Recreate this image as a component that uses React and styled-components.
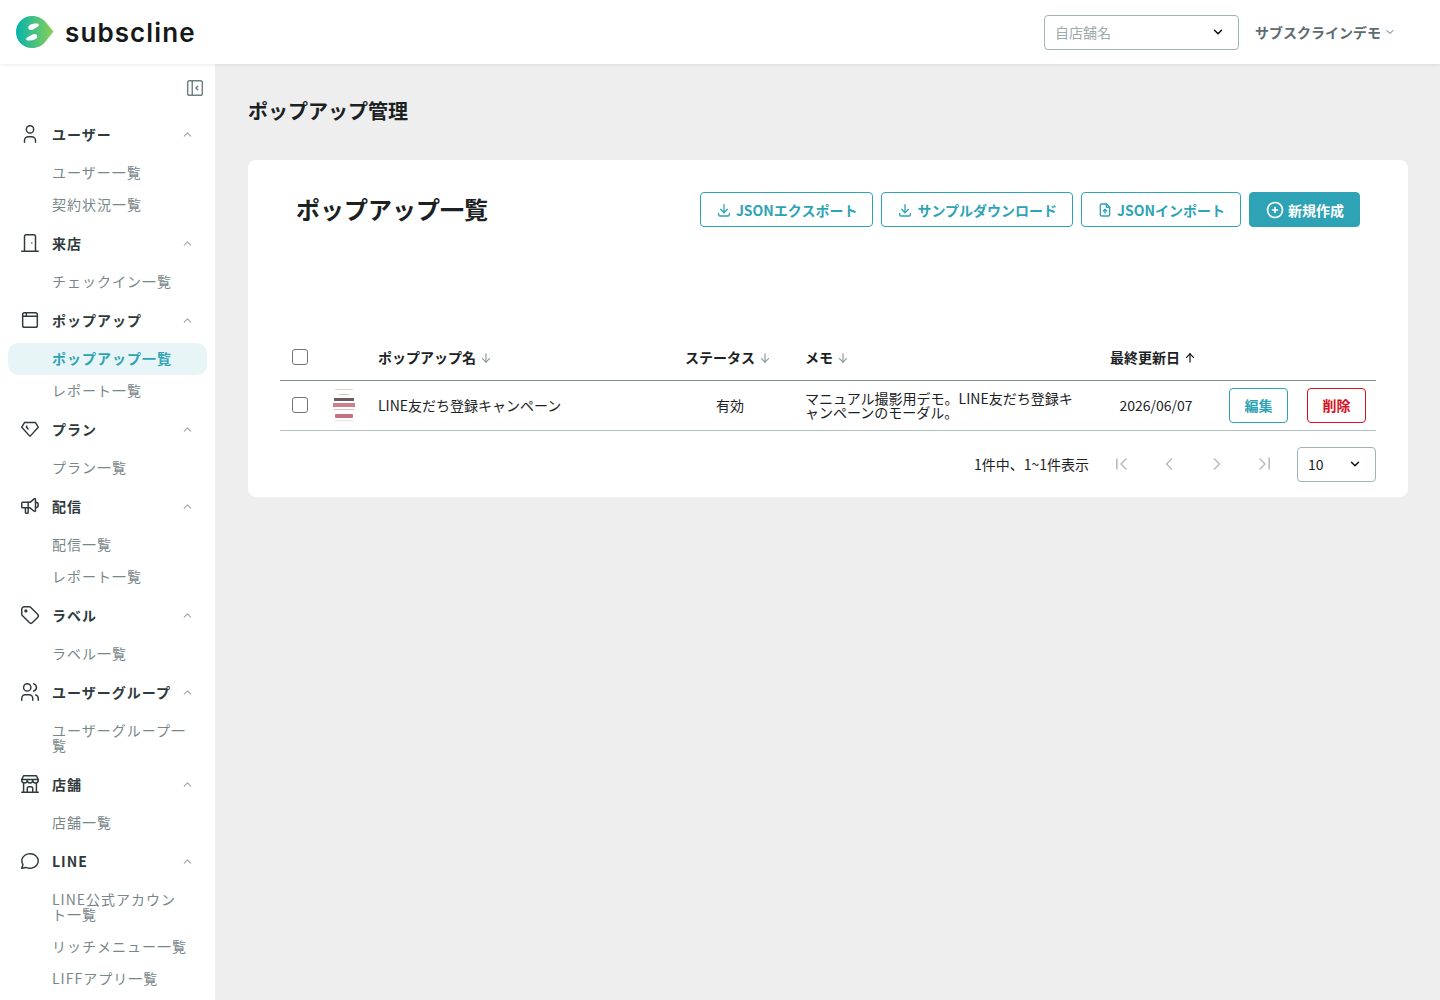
import React from 'react';
import styled, { createGlobalStyle } from 'styled-components';
import {
  TbUser, TbDoor, TbBrowser, TbDiamond, TbSpeakerphone, TbTag, TbUsers, TbBuildingStore, TbMessageCircle,
  TbChevronUp, TbChevronDown, TbDownload, TbCirclePlus, TbLayoutSidebarLeftCollapse,
  TbChevronLeftPipe, TbChevronRightPipe, TbChevronLeft, TbChevronRight, TbArrowDown, TbArrowUp, TbFileUpload,
} from 'react-icons/tb';

const sideGroups = [
  { icon: TbUser, title: 'ユーザー', items: ['ユーザー一覧', '契約状況一覧'] },
  { icon: TbDoor, title: '来店', items: ['チェックイン一覧'] },
  { icon: TbBrowser, title: 'ポップアップ', items: ['ポップアップ一覧', 'レポート一覧'], active: 'ポップアップ一覧' },
  { icon: TbDiamond, title: 'プラン', items: ['プラン一覧'] },
  { icon: TbSpeakerphone, title: '配信', items: ['配信一覧', 'レポート一覧'] },
  { icon: TbTag, title: 'ラベル', items: ['ラベル一覧'] },
  { icon: TbUsers, title: 'ユーザーグループ', items: ['ユーザーグループ一覧'] },
  { icon: TbBuildingStore, title: '店舗', items: ['店舗一覧'] },
  { icon: TbMessageCircle, title: 'LINE', items: ['LINE公式アカウント一覧', 'リッチメニュー一覧', 'LIFFアプリ一覧'] },
];

const LogoMark = () => (
  <svg width="38" height="32" viewBox="0 0 38 32">
    <defs>
      <linearGradient id="logoGrad" x1="0" y1="0" x2="1" y2="0">
        <stop offset="0%" stopColor="#06b3ae" />
        <stop offset="100%" stopColor="#8ccf55" />
      </linearGradient>
    </defs>
    <path d="M16 0C22 0 27 2.5 30 6.5L37.5 15.5L30 25C27 29.5 22 32 16 32C7 32 0 25 0 16C0 7 7 0 16 0Z" fill="url(#logoGrad)" />
    <path d="M21 7.5C18 7.5 13.5 8 12.5 10.5C11.5 13 14 15 17 13.5L22 10.5C23.5 9.5 23 7.5 21 7.5Z" fill="#fff" />
    <path d="M12 24.5C15 24.5 20 24 21 21.5C22 19 19.5 17 16.5 18.5L11 21.5C9.5 22.5 10 24.5 12 24.5Z" fill="#fff" />
  </svg>
);

const Thumb = () => (
  <svg width="28" height="34" viewBox="0 0 28 34">
    <rect width="28" height="34" fill="#fff" />
    <rect x="5" y="1" width="18" height="1" fill="#eccfd2" />
    <rect x="9" y="6" width="10" height="1" fill="#d8c4c6" />
    <rect x="4" y="10" width="20" height="3" fill="#6b5a5d" />
    <rect x="3" y="15" width="22" height="4" fill="#c9808a" />
    <rect x="4" y="21" width="20" height="1" fill="#cfc6c7" />
    <rect x="5" y="26" width="18" height="4" rx="1" fill="#c4717f" />
    <rect x="5" y="32" width="18" height="1" fill="#efdfe1" />
  </svg>
);

const App = () => {
  return (
    <>
      <GlobalStyle />
      <Page>
        <TopBar>
          <Logo>
            <LogoMark />
            <LogoText>subscline</LogoText>
          </Logo>
          <TopRight>
            <SelectBox $width={195}>
              <Placeholder>自店舗名</Placeholder>
              <TbChevronDown size={14} color="#111" strokeWidth={2.6} />
            </SelectBox>
            <UserMenu>
              サブスクラインデモ
              <TbChevronDown size={12} color="#5d6c6f" />
            </UserMenu>
          </TopRight>
        </TopBar>
        <Body>
          <Sidebar>
            <CollapseRow>
              <TbLayoutSidebarLeftCollapse size={22} color="#6f8083" strokeWidth={1.6} />
            </CollapseRow>
            {sideGroups.map((group) => {
              const Icon = group.icon;
              return (
                <div key={group.title}>
                  <GroupHead>
                    <GroupIcon><Icon size={22} color="#2f3a3c" strokeWidth={1.6} /></GroupIcon>
                    <GroupTitle>{group.title}</GroupTitle>
                    <TbChevronUp size={13} color="#9aa7a9" />
                  </GroupHead>
                  {group.items.map((item) => (
                    <SideItem key={item} $active={item === group.active}>{item}</SideItem>
                  ))}
                </div>
              );
            })}
          </Sidebar>
          <Main>
            <PageTitle>ポップアップ管理</PageTitle>
            <Card>
              <CardHead>
                <CardTitle>ポップアップ一覧</CardTitle>
                <Actions>
                  <OutlineButton><TbDownload size={16} />JSONエクスポート</OutlineButton>
                  <OutlineButton><TbDownload size={16} />サンプルダウンロード</OutlineButton>
                  <OutlineButton><TbFileUpload size={16} />JSONインポート</OutlineButton>
                  <SolidButton><TbCirclePlus size={20} />新規作成</SolidButton>
                </Actions>
              </CardHead>
              <Table>
                <colgroup>
                  <col width="40" />
                  <col width="48" />
                  <col width="307" />
                  <col width="120" />
                  <col width="305" />
                  <col width="112" />
                  <col width="164" />
                </colgroup>
                <thead>
                  <tr>
                    <HeadCell><CheckBox /></HeadCell>
                    <HeadCell />
                    <HeadCell>ポップアップ名<TbArrowDown size={14} color="#8a9698" /></HeadCell>
                    <HeadCell>ステータス<TbArrowDown size={14} color="#8a9698" /></HeadCell>
                    <HeadCell>メモ<TbArrowDown size={14} color="#8a9698" /></HeadCell>
                    <HeadCell>最終更新日<TbArrowUp size={14} color="#111" /></HeadCell>
                    <HeadCell />
                  </tr>
                </thead>
                <tbody>
                  <tr>
                    <Cell><CheckBox /></Cell>
                    <Cell><ThumbWrap><Thumb /></ThumbWrap></Cell>
                    <Cell>LINE友だち登録キャンペーン</Cell>
                    <StatusCell>有効</StatusCell>
                    <MemoCell>マニュアル撮影用デモ。LINE友だち登録キャンペーンのモーダル。</MemoCell>
                    <DateCell>2026/06/07</DateCell>
                    <Cell>
                      <RowActions>
                        <RowButton $color="#2ea3b5">編集</RowButton>
                        <RowButton $color="#d5121e">削除</RowButton>
                      </RowActions>
                    </Cell>
                  </tr>
                </tbody>
              </Table>
              <Pagination>
                <PageInfo>1件中、1~1件表示</PageInfo>
                <PageIcons>
                  <TbChevronLeftPipe size={20} />
                  <TbChevronLeft size={20} />
                  <TbChevronRight size={20} />
                  <TbChevronRightPipe size={20} />
                </PageIcons>
                <SelectBox $width={79}>
                  <PageSize>10</PageSize>
                  <TbChevronDown size={14} color="#111" strokeWidth={2.6} />
                </SelectBox>
              </Pagination>
            </Card>
          </Main>
        </Body>
      </Page>
    </>
  );
};

export default App;

const GlobalStyle = createGlobalStyle`
  html, body {
    margin: 0;
    height: 100%;
    overflow: hidden;
  }
  body {
    font-family: "Noto Sans CJK JP", "Noto Sans", sans-serif;
    color: #1c2224;
  }
  * {
    box-sizing: border-box;
  }
`;

const Page = styled.div`
  height: 1000px;
  display: flex;
  flex-direction: column;
  background: #eeeeee;
`;

const TopBar = styled.header`
  height: 64px;
  flex-shrink: 0;
  display: flex;
  align-items: center;
  justify-content: space-between;
  padding: 0 44px 0 16px;
  background: #fff;
  box-shadow: 0 1px 4px rgba(0, 0, 0, 0.08);
  position: relative;
  z-index: 2;
`;

const Logo = styled.div`
  display: flex;
  align-items: center;
  gap: 11px;
`;

const LogoText = styled.span`
  font-family: "Inter", sans-serif;
  font-size: 26px;
  font-weight: 600;
  letter-spacing: 1.1px;
  color: #15191a;
`;

const TopRight = styled.div`
  display: flex;
  align-items: center;
  gap: 16px;
`;

const SelectBox = styled.div`
  width: ${(p) => p.$width}px;
  height: 35px;
  display: flex;
  align-items: center;
  justify-content: space-between;
  padding: 0 13px 0 10px;
  background: #fff;
  border: 1px solid #a3b3b5;
  border-radius: 4px;
`;

const Placeholder = styled.span`
  font-size: 14px;
  color: #9caaac;
`;

const PageSize = styled.span`
  font-size: 14px;
  color: #1c2224;
`;

const UserMenu = styled.div`
  display: flex;
  align-items: center;
  gap: 3px;
  font-size: 14px;
  font-weight: 700;
  color: #5d6c6f;
`;

const Body = styled.div`
  flex: 1;
  display: flex;
  min-height: 0;
`;

const Sidebar = styled.aside`
  width: 215px;
  flex-shrink: 0;
  background: #fff;
  padding: 0 8px;
  overflow: hidden;
`;

const CollapseRow = styled.div`
  height: 47.5px;
  display: flex;
  align-items: center;
  justify-content: flex-end;
  padding: 0 1px 0 0;
`;

const GroupHead = styled.div`
  height: 45px;
  display: flex;
  align-items: center;
  padding: 0 13px 0 11px;
`;

const GroupIcon = styled.span`
  width: 33px;
  display: flex;
  align-items: center;
`;

const GroupTitle = styled.span`
  flex: 1;
  font-size: 14px;
  font-weight: 700;
  line-height: 15px;
  letter-spacing: 1px;
  color: #2f3a3c;
`;

const SideItem = styled.div`
  padding: 8.5px 16px 8.5px 44px;
  font-size: 14px;
  font-weight: ${(p) => (p.$active ? 700 : 400)};
  line-height: 15px;
  letter-spacing: 1px;
  color: ${(p) => (p.$active ? '#2ea3b5' : '#78878a')};
  background: ${(p) => (p.$active ? '#e8f5f7' : 'transparent')};
  border-radius: 10px;
`;

const Main = styled.main`
  flex: 1;
  padding: 32px 32px 0 33px;
`;

const PageTitle = styled.h1`
  margin: 0 0 35px;
  font-size: 20px;
  font-weight: 700;
  line-height: 29px;
  color: #1c2224;
`;

const Card = styled.section`
  height: 337px;
  padding: 32px 32px 16px;
  background: #fff;
  border-radius: 8px;
`;

const CardHead = styled.div`
  height: 143px;
  display: flex;
  align-items: flex-start;
  justify-content: space-between;
  padding: 0 16px;
`;

const CardTitle = styled.h2`
  margin: 0;
  font-size: 24px;
  font-weight: 700;
  line-height: 34px;
`;

const Actions = styled.div`
  display: flex;
  gap: 8px;
`;

const OutlineButton = styled.button`
  height: 35px;
  display: flex;
  align-items: center;
  gap: 4px;
  padding: 0 15px;
  font: 700 14px "Noto Sans CJK JP", sans-serif;
  color: #2ea3b5;
  background: #fff;
  border: 1px solid #2ea3b5;
  border-radius: 4px;
`;

const SolidButton = styled(OutlineButton)`
  gap: 3px;
  color: #fff;
  background: #2ea3b5;
`;

const Table = styled.table`
  width: 1096px;
  table-layout: fixed;
  border-collapse: collapse;
`;

const HeadCell = styled.th`
  height: 45px;
  padding: 0 10px;
  font-size: 14px;
  font-weight: 700;
  text-align: left;
  white-space: nowrap;
  border-bottom: 1px solid #7f8d8f;
  svg {
    margin-left: 3px;
    vertical-align: -2px;
  }
`;

const Cell = styled.td`
  height: 50px;
  padding: 0 10px;
  font-size: 14px;
  line-height: 14px;
  border-bottom: 1px solid #b3c0c1;
`;

const StatusCell = styled(Cell)`
  padding-right: 20px;
  text-align: center;
`;

const MemoCell = styled(Cell)`
  padding-right: 22px;
`;

const DateCell = styled(Cell)`
  text-align: center;
`;

const CheckBox = styled.input.attrs({ type: 'checkbox' })`
  display: block;
  width: 16px;
  height: 16px;
  margin: 0 auto 0 2px;
  appearance: none;
  background: #fff;
  border: 1px solid #767676;
  border-radius: 3px;
`;

const ThumbWrap = styled.div`
  display: flex;
  align-items: center;
`;

const RowActions = styled.div`
  display: flex;
  justify-content: flex-end;
  gap: 19px;
`;

const RowButton = styled.button`
  width: 59px;
  height: 35px;
  padding: 0;
  font: 700 14px "Noto Sans CJK JP", sans-serif;
  color: ${(p) => p.$color};
  background: #fff;
  border: 1px solid ${(p) => p.$color};
  border-radius: 4px;
`;

const Pagination = styled.div`
  display: flex;
  align-items: center;
  justify-content: flex-end;
  margin-top: 16px;
`;

const PageInfo = styled.span`
  font-size: 14px;
  margin-right: 22px;
`;

const PageIcons = styled.div`
  display: flex;
  gap: 28px;
  margin-right: 22px;
  color: #b9c0c1;
`;
